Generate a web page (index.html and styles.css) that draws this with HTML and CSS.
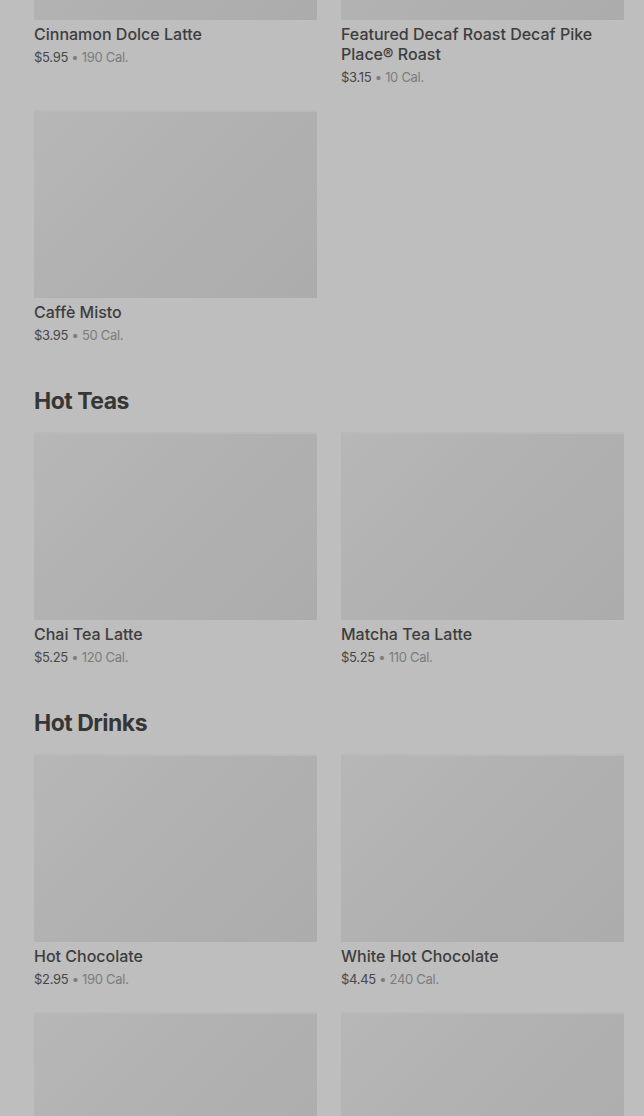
FILE: index.html
```html
<!DOCTYPE html>
<html lang="en">
<head>
  <meta charset="UTF-8" />
  <title>Menu</title>
  <link rel="stylesheet" href="styles.css">
</head>
<body>
  <main class="menu">
    <section class="category first">
      <div class="grid">
        <div class="product">
          <div class="thumb"></div>
          <h3>Cinnamon Dolce Latte</h3>
          <p class="meta"><span class="price">$5.95</span> • 190 Cal.</p>
        </div>
        <div class="product">
          <div class="thumb"></div>
          <h3>Featured Decaf Roast Decaf Pike Place® Roast</h3>
          <p class="meta"><span class="price">$3.15</span> • 10 Cal.</p>
        </div>
        <div class="product">
          <div class="thumb"></div>
          <h3>Caffè Misto</h3>
          <p class="meta"><span class="price">$3.95</span> • 50 Cal.</p>
        </div>
      </div>
    </section>

    <section class="category">
      <h2>Hot Teas</h2>
      <div class="grid">
        <div class="product">
          <div class="thumb"></div>
          <h3>Chai Tea Latte</h3>
          <p class="meta"><span class="price">$5.25</span> • 120 Cal.</p>
        </div>
        <div class="product">
          <div class="thumb"></div>
          <h3>Matcha Tea Latte</h3>
          <p class="meta"><span class="price">$5.25</span> • 110 Cal.</p>
        </div>
      </div>
    </section>

    <section class="category">
      <h2>Hot Drinks</h2>
      <div class="grid">
        <div class="product">
          <div class="thumb"></div>
          <h3>Hot Chocolate</h3>
          <p class="meta"><span class="price">$2.95</span> • 190 Cal.</p>
        </div>
        <div class="product">
          <div class="thumb"></div>
          <h3>White Hot Chocolate</h3>
          <p class="meta"><span class="price">$4.45</span> • 240 Cal.</p>
        </div>
        <div class="product">
          <div class="thumb"></div>
        </div>
        <div class="product">
          <div class="thumb"></div>
        </div>
      </div>
    </section>
  </main>
</body>
</html>
```

FILE: styles.css
```css
body { margin: 0; background: #bebebe; font-family: Inter, "Noto Sans", Arial, sans-serif; color: #3b3b3b; overflow: hidden; }
.menu { padding: 0 20px 0 34px; }
.category { margin-bottom: 40px; }
.category.first { margin-top: -168px; }
.category h2 { margin: 0 0 15px; font-size: 23px; line-height: 32px; font-weight: 700; letter-spacing: -0.5px; color: #363636; }
.grid { display: grid; grid-template-columns: 1fr 1fr; column-gap: 24px; row-gap: 23px; }
.thumb {
  height: 188px;
  background: linear-gradient(135deg, #b7b7b7 0%, #b1b1b1 45%, #acacac 100%);
  box-shadow: inset 0 2px 0 #b9b9b9;
}
.product h3 { margin: 4px 0 0; font-size: 16px; line-height: 20px; font-weight: 500; color: #3d3d3d; }
.meta { margin: 3px 0 0; font-size: 13px; line-height: 20px; letter-spacing: -0.3px; color: #7c7c7c; }
.meta .price { color: #474747; }
```
